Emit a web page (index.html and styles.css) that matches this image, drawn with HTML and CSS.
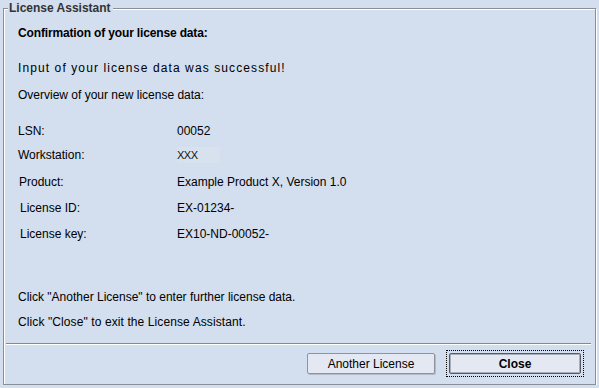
FILE: index.html
```html
<!DOCTYPE html>
<html>
<head>
<meta charset="utf-8">
<link rel="stylesheet" href="styles.css">
</head>
<body>
<div class="panel">
  <span class="panel-title">License Assistant</span>
  <div class="content">
    <div class="heading">Confirmation of your license data:</div>
    <div class="line gap-a wide">Input of your license data was successful!</div>
    <div class="line gap-b">Overview of your new license data:</div>
    <div class="data">
      <div class="row r1"><span class="label">LSN:</span><span class="value">00052</span></div>
      <div class="row r2"><span class="label">Workstation:</span><span class="value field">XXX</span></div>
      <div class="row r3"><span class="label l1">Product:</span><span class="value">Example Product X, Version 1.0</span></div>
      <div class="row r4"><span class="label l2">License ID:</span><span class="value">EX-01234-</span></div>
      <div class="row r4"><span class="label l2">License key:</span><span class="value">EX10-ND-00052-</span></div>
    </div>
    <div class="line gap-c">Click "Another License" to enter further license data.</div>
    <div class="line gap-d">Click "Close" to exit the License Assistant.</div>
  </div>
  <div class="sep"></div>
  <div class="buttons">
    <button class="btn">Another License</button>
    <span class="focus"><button class="btn btn-default">Close</button></span>
  </div>
</div>
</body>
</html>
```
FILE: styles.css
```css
html, body {
  margin: 0;
  padding: 0;
  background: #d3deee;
}
body {
  font-family: "Liberation Sans", Arial, sans-serif;
  font-size: 12px;
  color: #000;
}
.panel {
  position: relative;
  box-sizing: border-box;
  margin: 8px 0 0 3px;
  width: 593px;
  height: 377px;
  border: 1px solid #8a8e96;
  box-shadow: 1px 1px 0 #fff, inset 1px 1px 0 #fff;
  display: flex;
  flex-direction: column;
}
.panel-title {
  position: absolute;
  left: 4px;
  top: -9px;
  padding: 0 2px 0 1px;
  background: #d3deee;
  font-weight: bold;
  font-size: 12px;
  line-height: 16px;
  color: #333;
}
.content {
  padding-left: 14px;
  line-height: 16px;
}
.heading {
  margin-top: 16px;
  font-weight: bold;
  letter-spacing: -0.15px;
}
.wide { letter-spacing: 1.1px; }
.gap-a { margin-top: 19px; }
.gap-b { margin-top: 11px; }
.data { margin-top: 20px; }
.row { display: flex; }
.r2 { margin-top: 8px; }
.r3 { margin-top: 11px; }
.r4 { margin-top: 10px; }
.label { width: 159px; }
.l1 { padding-left: 1px; width: 158px; }
.l2 { padding-left: 2px; width: 157px; }
.field {
  width: 43px;
  background: #d8e2ef;
  color: #111;
  font-size: 11px;
  letter-spacing: -0.5px;
}
.gap-c { margin-top: 47px; }
.gap-d { margin-top: 9px; letter-spacing: 0.1px; }
.sep {
  margin: 13px 4px 0 2px;
  border-top: 1px solid #85898f;
  border-bottom: 1px solid #fff;
}
.buttons {
  display: flex;
  justify-content: flex-end;
  align-items: center;
  gap: 11px;
  padding: 5px 11px 0 0;
}
.btn {
  box-sizing: border-box;
  height: 21px;
  width: 128px;
  margin: 0;
  padding: 0;
  font-family: "Liberation Sans", Arial, sans-serif;
  font-size: 12px;
  color: #000;
  background: #e3e8f3;
  border: 1px solid #8f939b;
  border-radius: 2px;
  box-shadow: 1px 1px 0 #b4bac6;
}
.focus {
  display: inline-block;
  padding: 2px;
  border: 1px dotted #000;
}
.btn-default {
  width: 132px;
  font-weight: bold;
  border-color: #555a63;
  box-shadow: inset 0 0 0 1px #a9aeb8;
}
```
